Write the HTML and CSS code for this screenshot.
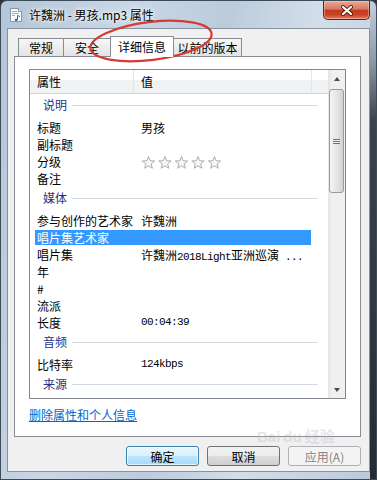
FILE: index.html
```html
<!DOCTYPE html>
<html lang="zh-CN">
<head>
    <meta charset="UTF-8" />
    <title>许魏洲 - 男孩.mp3 属性</title>
    <link rel="stylesheet" href="styles.css">
</head>
<body>

    <div class="window">
        <!-- Title bar -->
        <div class="titlebar">
            <svg class="app-icon" width="16" height="16" viewBox="0 0 16 16">
                <path d="M2.5 1.5h8l3 3v10h-11z" fill="#fbfcfd" stroke="#8796a8"/>
                <path d="M10.5 1.5v3h3" fill="#e1e7ee" stroke="#8796a8"/>
                <path d="M4 4.5h5M4 6.5h7M4 8.5h3" stroke="#9fb0c2"/>
                <path d="M9.5 8.5v4.3M9.5 8.5l2.5 1" stroke="#2f66a8" fill="none"/>
                <ellipse cx="8.2" cy="12.9" rx="1.5" ry="1.1" fill="#2f66a8"/>
            </svg>
            <span class="title">许魏洲 - 男孩.mp3 属性</span>
            <div class="close-btn">
                <svg width="14" height="11" viewBox="0 0 14 11">
                    <path d="M3 2l8 7M11 2l-8 7" stroke="#5a1a10" stroke-width="4" stroke-linecap="round"/>
                    <path d="M3 2l8 7M11 2l-8 7" stroke="#fff" stroke-width="2.2" stroke-linecap="round"/>
                </svg>
            </div>
        </div>

        <!-- Client area -->
        <div class="client">
            <div class="tabs">
                <div class="tab tab-general">常规</div>
                <div class="tab tab-security">安全</div>
                <div class="tab tab-details tab-active">详细信息</div>
                <div class="tab tab-versions">以前的版本</div>
            </div>

            <div class="panel">
                <div class="listview">
                    <div class="list-main">
                        <div class="list-header">
                            <div class="hcell col-name">属性</div>
                            <div class="hcell col-value">值</div>
                            <div class="hcell col-rest"></div>
                        </div>

                        <div class="group"><span>说明</span><i></i></div>
                        <div class="row"><span class="name">标题</span><span class="value">男孩</span></div>
                        <div class="row"><span class="name">副标题</span><span class="value"></span></div>
                        <div class="row">
                            <span class="name">分级</span>
                            <span class="value">
                                <svg class="stars" width="82" height="14" viewBox="0 0 82 14">
                                    <defs>
                                        <path id="star" d="M6.5 0.5L8.15 4.73 12.68 4.99 9.16 7.870 10.32 12.26 6.5 9.8 2.68 12.26 3.84 7.87 0.32 4.99 4.85 4.73z"/>
                                    </defs>
                                    <use href="#star" x="0" y="0"/>
                                    <use href="#star" x="16.5" y="0"/>
                                    <use href="#star" x="33" y="0"/>
                                    <use href="#star" x="49.5" y="0"/>
                                    <use href="#star" x="66" y="0"/>
                                </svg>
                            </span>
                        </div>
                        <div class="row"><span class="name">备注</span><span class="value"></span></div>

                        <div class="group"><span>媒体</span><i></i></div>
                        <div class="row"><span class="name">参与创作的艺术家</span><span class="value">许魏洲</span></div>
                        <div class="row row-selected"><span class="name">唱片集艺术家</span><span class="value"></span></div>
                        <div class="row"><span class="name">唱片集</span><span class="value">许魏洲<span class="latin">2018Light</span>亚洲巡演<span class="latin"> ...</span></span></div>
                        <div class="row"><span class="name">年</span><span class="value"></span></div>
                        <div class="row"><span class="name">#</span><span class="value"></span></div>
                        <div class="row"><span class="name">流派</span><span class="value"></span></div>
                        <div class="row"><span class="name">长度</span><span class="value latin">00:04:39</span></div>

                        <div class="group"><span>音频</span><i></i></div>
                        <div class="row"><span class="name">比特率</span><span class="value latin">124kbps</span></div>

                        <div class="group"><span>来源</span><i></i></div>
                    </div>

                    <!-- Scrollbar -->
                    <div class="scrollbar">
                        <div class="sb-btn"><span class="arrow-up"></span></div>
                        <div class="sb-thumb"><span class="grip"></span></div>
                        <div class="sb-track"></div>
                        <div class="sb-btn"><span class="arrow-down"></span></div>
                    </div>
                </div>

                <a class="remove-link" href="#">删除属性和个人信息</a>
            </div>

            <!-- Dialog buttons -->
            <div class="buttons">
                <button class="btn btn-default">确定</button>
                <button class="btn">取消</button>
                <button class="btn" disabled>应用(A)</button>
            </div>
        </div>

        <!-- red marker drawn over the screenshot -->
        <svg class="marker" width="377" height="480" viewBox="0 0 377 480">
            <ellipse cx="151" cy="41" rx="61" ry="19" transform="rotate(-7 151 41)" fill="none" stroke="#d63a33" stroke-width="2.2"/>
        </svg>

        <div class="watermark"><span class="wm-latin">Bai</span><span class="wm-latin">du</span><span>经验</span></div>
    </div>

</body>
</html>
```

FILE: styles.css
```css
body {
    margin: 0;
    padding: 0;
    background-color: #2d353f;
    font-family: "Noto Sans CJK SC", "Liberation Sans", sans-serif;
    font-size: 12px;
    color: #000;
    overflow: hidden;
}

/* Window frame */
.window {
    position: relative;
    width: 377px;
    height: 480px;
    box-sizing: border-box;
    border: 1px solid #3e4a57;
    border-radius: 7px 7px 0 0;
    padding: 0 6px 7px 6px;
    display: flex;
    flex-direction: column;
    background:
        linear-gradient(#c3d0dd 0, #8c99a6 60px, #3a434d 120px, #262c33 100%) right top / 6px 100% no-repeat,
        linear-gradient(100deg, #b3c5d8 0%, #c9d7e5 28%, #bccbdb 50%, #d3dee9 70%, #b9c9da 100%);
}

.titlebar {
    height: 27px;
    display: flex;
    align-items: center;
    padding-left: 1px;
}

.app-icon {
    display: block;
}

.title {
    margin-left: 5px;
    line-height: 16px;
    text-shadow: 0 0 6px #fff, 0 0 3px #fff;
}

.close-btn {
    margin-left: auto;
    align-self: flex-start;
    width: 47px;
    height: 19px;
    box-sizing: border-box;
    border: 1px solid #5e2418;
    border-top: none;
    border-radius: 0 0 5px 5px;
    background: linear-gradient(#eaa996 0%, #d87963 45%, #c23a1e 52%, #cc4528 78%, #e08468 100%);
    display: flex;
    align-items: center;
    justify-content: center;
    box-shadow: inset 0 0 0 1px rgba(255, 210, 190, 0.45);
}

.close-btn svg {
    display: block;
}

/* Client area */
.client {
    flex: 1;
    background-color: #f0f0f0;
    border: 1px solid #8492a1;
    box-sizing: border-box;
    padding: 7px 8px 0 6px;
    display: flex;
    flex-direction: column;
}

/* Tabs */
.tabs {
    height: 20px;
    display: flex;
    align-items: flex-end;
    padding-left: 4px;
}

.tab {
    height: 18px;
    box-sizing: border-box;
    border: 1px solid #898c95;
    border-bottom: none;
    background: linear-gradient(#f7f7f7, #e3e3e3);
    text-align: center;
    line-height: 17px;
    margin-left: -1px;
}

.tab-general { width: 46px; margin-left: 0; }
.tab-security { width: 48px; }
.tab-details { width: 64px; }
.tab-versions { width: 69px; }

.tab-active {
    position: relative;
    z-index: 2;
    height: 21px;
    margin-bottom: -1px;
    background: #fff;
    line-height: 19px;
}

.panel {
    height: 381px;
    box-sizing: border-box;
    border: 1px solid #898c95;
    background-color: #fff;
    padding: 12px 14px;
}

/* List view */
.listview {
    height: 330px;
    box-sizing: border-box;
    border: 1px solid #828790;
    display: flex;
}

.list-main {
    flex: 1;
    overflow: hidden;
}

.list-header {
    height: 24px;
    box-sizing: border-box;
    display: flex;
    border-bottom: 1px solid #d5d5d5;
    background: linear-gradient(#fff 0%, #fff 42%, #f1f2f4 46%, #f1f2f4 100%);
}

.hcell {
    box-sizing: border-box;
    padding-left: 7px;
    line-height: 23px;
    border-right: 1px solid #e3e4e6;
}

.col-name { width: 104px; }
.col-value { width: 178px; }
.col-rest { flex: 1; border-right: none; }

.group {
    height: 25px;
    box-sizing: border-box;
    padding: 0 10px 3px 13px;
    display: flex;
    align-items: center;
    color: #1e3287;
    line-height: 16px;
}

.group i {
    flex: 1;
    height: 1px;
    margin-left: 5px;
    background-color: #d3d9e2;
}

.row {
    height: 17px;
    line-height: 17px;
    display: flex;
    white-space: nowrap;
}

.row .name {
    width: 104px;
    box-sizing: border-box;
    padding-left: 7px;
}

.row .value {
    padding-left: 7px;
}

.latin {
    font-family: "Liberation Mono", monospace;
    font-size: 11px;
    letter-spacing: -0.6px;
    white-space: pre;
}

.row-selected {
    color: #fff;
    background: linear-gradient(#3399ff, #3399ff) 5px 1px / 276px 15px no-repeat;
}

.stars {
    display: inline-block;
    vertical-align: -3px;
    margin-left: 1px;
    fill: #f7f7f7;
    stroke: #a4a4a4;
    stroke-width: 0.9;
}

/* Scrollbar */
.scrollbar {
    width: 17px;
    display: flex;
    flex-direction: column;
    background: linear-gradient(to right, #e4e4e4, #f0f0f0 25%, #f0f0f0);
}

.sb-btn {
    height: 17px;
    display: flex;
    align-items: center;
    justify-content: center;
}

.arrow-up {
    border-left: 3px solid transparent;
    border-right: 3px solid transparent;
    border-bottom: 4px solid #4a4a4a;
}

.arrow-down {
    border-left: 3px solid transparent;
    border-right: 3px solid transparent;
    border-top: 4px solid #4a4a4a;
}

.sb-thumb {
    height: 104px;
    margin: 2px 1px 0 1px;
    box-sizing: border-box;
    border: 1px solid #9a9a9a;
    border-radius: 3px;
    background: linear-gradient(to right, #f5f5f5, #e6e6e6 50%, #d2d2d2);
    display: flex;
    align-items: center;
    justify-content: center;
}

.grip {
    width: 7px;
    height: 5px;
    background: repeating-linear-gradient(#6e6e6e 0, #6e6e6e 1px, #f4f4f4 1px, #f4f4f4 2px);
}

.sb-track {
    flex: 1;
}

.remove-link {
    display: inline-block;
    margin-top: 8px;
    line-height: 16px;
    color: #0066cc;
    text-decoration: underline;
}

/* Buttons */
.buttons {
    margin-top: 9px;
    display: flex;
    justify-content: flex-end;
    gap: 8px;
}

.btn {
    width: 73px;
    height: 20px;
    padding: 0;
    border: 1px solid #707070;
    border-radius: 3px;
    background: linear-gradient(#f2f2f2 0%, #ebebeb 50%, #dddddd 51%, #cfcfcf 100%);
    font-family: "Noto Sans CJK SC", sans-serif;
    font-size: 12px;
    line-height: 17px;
    color: #000;
}

.btn-default {
    border-color: #3c7fb1;
    background: linear-gradient(#eaf6fd 0%, #d9f0fc 50%, #bee6fd 51%, #a7d9f5 100%);
    box-shadow: inset 0 0 0 1px rgba(255, 255, 255, 0.7);
}

.btn:disabled {
    border-color: #adb2b5;
    background: #f4f4f4;
    color: #838383;
}

/* overlays from the screenshot */
.marker {
    position: absolute;
    left: -1px;
    top: -1px;
    pointer-events: none;
}

.watermark {
    position: absolute;
    left: 256px;
    top: 426px;
    font-size: 15px;
    line-height: 18px;
    font-weight: bold;
    color: rgba(190, 190, 190, 0.4);
    white-space: nowrap;
}

.wm-latin {
    font-family: "Liberation Sans", sans-serif;
    margin-right: 3px;
}
```
